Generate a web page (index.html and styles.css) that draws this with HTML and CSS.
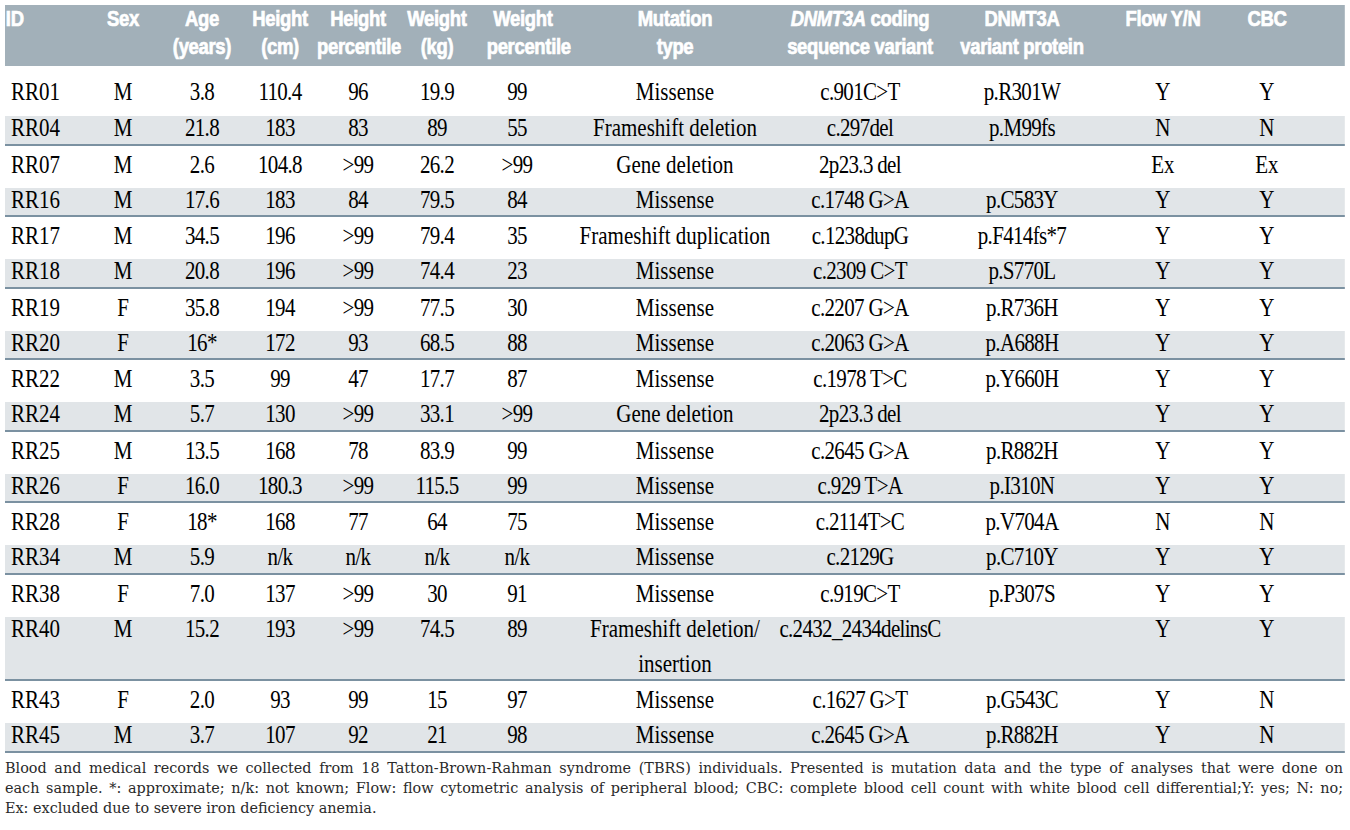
FILE: index.html
```html
<!DOCTYPE html>
<html lang="en">
<head>
<meta charset="utf-8">
<title>TBRS individuals table</title>
<link rel="stylesheet" href="styles.css">
</head>
<body>
<div class="page">
  <div class="sheet">
    <div class="table">
      <div class="row hdr">
        <div class="cell id">ID</div>
        <div class="cell">Sex</div>
        <div class="cell">Age<br>(years)</div>
        <div class="cell">Height<br>(cm)</div>
        <div class="cell">Height<br>percentile</div>
        <div class="cell">Weight<br>(kg)</div>
        <div class="cell wpct">Weight<br>percentile</div>
        <div class="cell mut">Mutation<br>type</div>
        <div class="cell"><i>DNMT3A</i> coding<br>sequence variant</div>
        <div class="cell">DNMT3A<br>variant protein</div>
        <div class="cell">Flow Y/N</div>
        <div class="cell cbc">CBC</div>
      </div>

      <div class="row w first">
        <div class="cell id">RR01</div><div class="cell">M</div><div class="cell num">3.8</div><div class="cell num">110.4</div><div class="cell num">96</div><div class="cell num">19.9</div><div class="cell num">99</div>
        <div class="cell mut">Missense</div><div class="cell code">c.901C&gt;T</div><div class="cell code">p.R301W</div><div class="cell">Y</div><div class="cell cbc">Y</div>
      </div>
      <div class="row g">
        <div class="cell id">RR04</div><div class="cell">M</div><div class="cell num">21.8</div><div class="cell num">183</div><div class="cell num">83</div><div class="cell num">89</div><div class="cell num">55</div>
        <div class="cell mut">Frameshift deletion</div><div class="cell code">c.297del</div><div class="cell code">p.M99fs</div><div class="cell">N</div><div class="cell cbc">N</div>
      </div>

      <div class="row w">
        <div class="cell id">RR07</div><div class="cell">M</div><div class="cell num">2.6</div><div class="cell num">104.8</div><div class="cell num">&gt;99</div><div class="cell num">26.2</div><div class="cell num">&gt;99</div>
        <div class="cell mut">Gene deletion</div><div class="cell code">2p23.3 del</div><div class="cell code"></div><div class="cell">Ex</div><div class="cell cbc">Ex</div>
      </div>
      <div class="row g">
        <div class="cell id">RR16</div><div class="cell">M</div><div class="cell num">17.6</div><div class="cell num">183</div><div class="cell num">84</div><div class="cell num">79.5</div><div class="cell num">84</div>
        <div class="cell mut">Missense</div><div class="cell code">c.1748 G&gt;A</div><div class="cell code">p.C583Y</div><div class="cell">Y</div><div class="cell cbc">Y</div>
      </div>

      <div class="row w">
        <div class="cell id">RR17</div><div class="cell">M</div><div class="cell num">34.5</div><div class="cell num">196</div><div class="cell num">&gt;99</div><div class="cell num">79.4</div><div class="cell num">35</div>
        <div class="cell mut">Frameshift duplication</div><div class="cell code">c.1238dupG</div><div class="cell code">p.F414fs*7</div><div class="cell">Y</div><div class="cell cbc">Y</div>
      </div>
      <div class="row g">
        <div class="cell id">RR18</div><div class="cell">M</div><div class="cell num">20.8</div><div class="cell num">196</div><div class="cell num">&gt;99</div><div class="cell num">74.4</div><div class="cell num">23</div>
        <div class="cell mut">Missense</div><div class="cell code">c.2309 C&gt;T</div><div class="cell code">p.S770L</div><div class="cell">Y</div><div class="cell cbc">Y</div>
      </div>

      <div class="row w">
        <div class="cell id">RR19</div><div class="cell">F</div><div class="cell num">35.8</div><div class="cell num">194</div><div class="cell num">&gt;99</div><div class="cell num">77.5</div><div class="cell num">30</div>
        <div class="cell mut">Missense</div><div class="cell code">c.2207 G&gt;A</div><div class="cell code">p.R736H</div><div class="cell">Y</div><div class="cell cbc">Y</div>
      </div>
      <div class="row g">
        <div class="cell id">RR20</div><div class="cell">F</div><div class="cell num">16*</div><div class="cell num">172</div><div class="cell num">93</div><div class="cell num">68.5</div><div class="cell num">88</div>
        <div class="cell mut">Missense</div><div class="cell code">c.2063 G&gt;A</div><div class="cell code">p.A688H</div><div class="cell">Y</div><div class="cell cbc">Y</div>
      </div>

      <div class="row w">
        <div class="cell id">RR22</div><div class="cell">M</div><div class="cell num">3.5</div><div class="cell num">99</div><div class="cell num">47</div><div class="cell num">17.7</div><div class="cell num">87</div>
        <div class="cell mut">Missense</div><div class="cell code">c.1978 T&gt;C</div><div class="cell code">p.Y660H</div><div class="cell">Y</div><div class="cell cbc">Y</div>
      </div>
      <div class="row g">
        <div class="cell id">RR24</div><div class="cell">M</div><div class="cell num">5.7</div><div class="cell num">130</div><div class="cell num">&gt;99</div><div class="cell num">33.1</div><div class="cell num">&gt;99</div>
        <div class="cell mut">Gene deletion</div><div class="cell code">2p23.3 del</div><div class="cell code"></div><div class="cell">Y</div><div class="cell cbc">Y</div>
      </div>

      <div class="row w">
        <div class="cell id">RR25</div><div class="cell">M</div><div class="cell num">13.5</div><div class="cell num">168</div><div class="cell num">78</div><div class="cell num">83.9</div><div class="cell num">99</div>
        <div class="cell mut">Missense</div><div class="cell code">c.2645 G&gt;A</div><div class="cell code">p.R882H</div><div class="cell">Y</div><div class="cell cbc">Y</div>
      </div>
      <div class="row g">
        <div class="cell id">RR26</div><div class="cell">F</div><div class="cell num">16.0</div><div class="cell num">180.3</div><div class="cell num">&gt;99</div><div class="cell num">115.5</div><div class="cell num">99</div>
        <div class="cell mut">Missense</div><div class="cell code">c.929 T&gt;A</div><div class="cell code">p.I310N</div><div class="cell">Y</div><div class="cell cbc">Y</div>
      </div>

      <div class="row w">
        <div class="cell id">RR28</div><div class="cell">F</div><div class="cell num">18*</div><div class="cell num">168</div><div class="cell num">77</div><div class="cell num">64</div><div class="cell num">75</div>
        <div class="cell mut">Missense</div><div class="cell code">c.2114T&gt;C</div><div class="cell code">p.V704A</div><div class="cell">N</div><div class="cell cbc">N</div>
      </div>
      <div class="row g">
        <div class="cell id">RR34</div><div class="cell">M</div><div class="cell num">5.9</div><div class="cell num">n/k</div><div class="cell num">n/k</div><div class="cell num">n/k</div><div class="cell num">n/k</div>
        <div class="cell mut">Missense</div><div class="cell code">c.2129G</div><div class="cell code">p.C710Y</div><div class="cell">Y</div><div class="cell cbc">Y</div>
      </div>

      <div class="row w">
        <div class="cell id">RR38</div><div class="cell">F</div><div class="cell num">7.0</div><div class="cell num">137</div><div class="cell num">&gt;99</div><div class="cell num">30</div><div class="cell num">91</div>
        <div class="cell mut">Missense</div><div class="cell code">c.919C&gt;T</div><div class="cell code">p.P307S</div><div class="cell">Y</div><div class="cell cbc">Y</div>
      </div>
      <div class="row g tall">
        <div class="cell id">RR40</div><div class="cell">M</div><div class="cell num">15.2</div><div class="cell num">193</div><div class="cell num">&gt;99</div><div class="cell num">74.5</div><div class="cell num">89</div>
        <div class="cell mut"><div class="wrap">Frameshift deletion/<br>insertion</div></div><div class="cell code">c.2432_2434delinsC</div><div class="cell code"></div><div class="cell">Y</div><div class="cell cbc">Y</div>
      </div>

      <div class="row w">
        <div class="cell id">RR43</div><div class="cell">F</div><div class="cell num">2.0</div><div class="cell num">93</div><div class="cell num">99</div><div class="cell num">15</div><div class="cell num">97</div>
        <div class="cell mut">Missense</div><div class="cell code">c.1627 G&gt;T</div><div class="cell code">p.G543C</div><div class="cell">Y</div><div class="cell cbc">N</div>
      </div>
      <div class="row g">
        <div class="cell id">RR45</div><div class="cell">M</div><div class="cell num">3.7</div><div class="cell num">107</div><div class="cell num">92</div><div class="cell num">21</div><div class="cell num">98</div>
        <div class="cell mut">Missense</div><div class="cell code">c.2645 G&gt;A</div><div class="cell code">p.R882H</div><div class="cell">Y</div><div class="cell cbc">N</div>
      </div>
    </div>
  </div>
  <div class="caption">
    <span class="ln just">Blood and medical records we collected from 18 Tatton-Brown-Rahman syndrome (TBRS) individuals. Presented is mutation data and the type of analyses that were done on</span>
    <span class="ln just">each sample. *: approximate; n/k: not known; Flow: flow cytometric analysis of peripheral blood; CBC: complete blood cell count with white blood cell differential;Y: yes; N: no;</span>
    <span class="ln">Ex: excluded due to severe iron deficiency anemia.</span>
  </div>
</div>
</body>
</html>
```

FILE: styles.css
```css
html, body {
  margin: 0;
  padding: 0;
  background: #ffffff;
}

.page {
  padding: 5px;
}

.sheet {
  width: 1340px;
  overflow: hidden;
}

.table {
  --cols: 95.24px 90.48px 97.62px 88.1px 97.62px 90.48px 100px 259.52px 197.62px 188.1px 147.62px 142.86px;
  width: 1595.24px;
  transform: scaleX(0.84);
  transform-origin: 0 0;
}

.row {
  display: grid;
  grid-template-columns: var(--cols);
  box-sizing: border-box;
  font-family: "Liberation Serif", "Times New Roman", serif;
  font-size: 25px;
  line-height: 24px;
  color: #000;
}

.cell {
  text-align: center;
  white-space: nowrap;
}

.cell.id {
  text-align: left;
  padding-left: 7px;
}

.cell.mut {
  padding-left: 16.67px;
}

.cell.cbc {
  padding-right: 42.86px;
}

.cell.num,
.cell.code {
  letter-spacing: -0.8px;
}

.hdr {
  height: 61px;
  background: #a2b0b9;
  color: #ffffff;
  font-family: "Liberation Sans", Arial, sans-serif;
  font-weight: bold;
  font-size: 22px;
  letter-spacing: -0.4px;
  line-height: 28px;
  -webkit-text-stroke: 0.7px #ffffff;
}

.hdr .cell.id {
  padding-left: 1px;
}

.hdr .cell.wpct {
  padding-left: 14px;
}

.w {
  height: 42px;
  padding-top: 7px;
  background: #ffffff;
}

.w.first {
  height: 50px;
  padding-top: 14px;
}

.g {
  height: 29.5px;
  background: #e1e5e8;
  border-bottom: 2px solid #7b91a1;
}

.g.tall {
  height: 64.5px;
}

.wrap {
  line-height: 35px;
  margin-top: -6px;
  margin-bottom: -2px;
}

.caption {
  padding-top: 5px;
  width: 1338px;
  font-family: "DejaVu Serif", serif;
  font-size: 14.4px;
  line-height: 20px;
  color: #2a2a2a;
}

.ln {
  display: block;
  white-space: nowrap;
}

.ln.just {
  white-space: normal;
  text-align: justify;
  text-align-last: justify;
}
```
